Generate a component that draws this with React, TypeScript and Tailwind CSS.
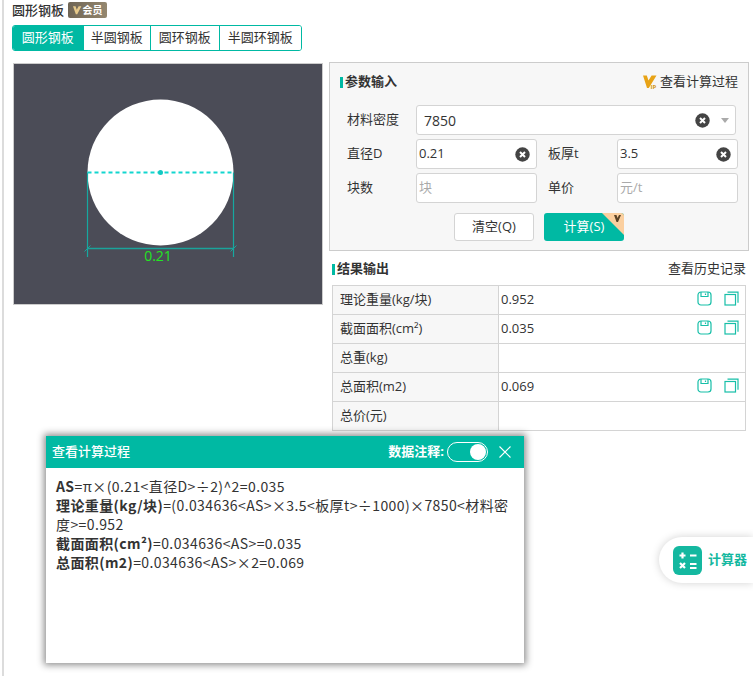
const font = { fontFamily: '"Open Sans", "Noto Sans CJK SC", sans-serif' };
const dialogFont = { fontFamily: '"Noto Sans CJK SC", sans-serif' };

const tabs = [
  { label: "圆形钢板", width: "w-[70px]" },
  { label: "半圆钢板", width: "w-[68px]" },
  { label: "圆环钢板", width: "w-[69px]" },
  { label: "半圆环钢板", width: "w-[83px]" },
];

const results = [
  { name: "理论重量(kg/块)", value: "0.952" },
  { name: "截面面积(cm²)", value: "0.035" },
  { name: "总重(kg)", value: "" },
  { name: "总面积(m2)", value: "0.069" },
  { name: "总价(元)", value: "" },
];

function ClearIcon() {
  return (
    <svg width="15" height="15" viewBox="0 0 15 15" className="shrink-0">
      <circle cx="7.500" cy="7.500" r="7.200" fill="#444" />
      <path d="M5 5l5 5M10 5l-5 5" stroke="#fff" strokeWidth="2" />
    </svg>
  );
}

function VipMark() {
  return (
    <svg width="14" height="14" viewBox="0 0 14 14">
      <path d="M0 0.500h3.800l1.700 5L8.600 0.500H13.500L5.800 13H4z" fill="#e8a316" />
      <text x="7.500" y="13.500" fontSize="6" fontWeight="700" fill="#d2950f" fontFamily="Open Sans, sans-serif">
        IP
      </text>
    </svg>
  );
}

function BadgeMark() {
  return (
    <svg width="9" height="9" viewBox="0 0 14 14">
      <path d="M0 0.500h4l1.800 5.500L8.800 0.500H13L6.600 13H4.400z" fill="#e6c98a" />
    </svg>
  );
}

function SaveIcon() {
  return (
    <svg width="15" height="15" viewBox="0 0 15 15" fill="none" stroke="#17bfa8" strokeWidth="1.200">
      <rect x="1" y="1" width="13" height="13" rx="3" />
      <path d="M4 1v4.500h7V1M8.500 2.500v1.500" />
    </svg>
  );
}

function CopyIcon() {
  return (
    <svg width="15" height="15" viewBox="0 0 15 15" fill="none" stroke="#17bfa8" strokeWidth="1.200">
      <rect x="1" y="3.500" width="10.500" height="10.500" />
      <path d="M3.500 1.200H14v10.500" />
    </svg>
  );
}

function Field({ value, placeholder }: { value?: string; placeholder?: string }) {
  return (
    <div className="flex h-[30px] w-[121px] items-center rounded-[3px] border border-[#d4d4d4] bg-white pl-[2px] pr-[6px]">
      <span className={`flex-1 text-[13px] ${value ? "text-[#333]" : "text-[#aaa]"}`}>{value || placeholder}</span>
      {value && <ClearIcon />}
    </div>
  );
}

function SectionTitle({ text }: { text: string }) {
  return (
    <div className="flex items-center text-[13px] font-bold text-[#333]">
      <span className="h-[11px] w-[3px] bg-[#00b9a3]" />
      <span className="ml-[2px]">{text}</span>
    </div>
  );
}

function ShapeDrawing() {
  return (
    <svg width="308" height="240" viewBox="0 0 308 240" className="block">
      <circle cx="146.500" cy="108.500" r="73" fill="#fff" />
      <path d="M73.500 108.500V193M219.500 108.500V193" stroke="#16a8a0" strokeWidth="1.200" />
      <path d="M73.500 184.500h146" stroke="#1aa39b" strokeWidth="1.400" />
      <path d="M70.500 187.500l6-6M216.500 187.500l6-6" stroke="#1aa39b" strokeWidth="1" />
      <path d="M73.500 108.500h146" stroke="#12d6cf" strokeWidth="2" strokeDasharray="4 3" />
      <circle cx="146.500" cy="108.500" r="2.500" fill="#12c9c2" />
      <text x="144" y="197" textAnchor="middle" fontSize="14" fill="#22e622" fontFamily="Open Sans, sans-serif">
        0.21
      </text>
    </svg>
  );
}

function ProcessDialog() {
  return (
    <div className="absolute left-[46px] top-[436px] h-[227px] w-[478px] bg-white shadow-[0_0_7px_2px_rgba(0,0,0,0.45)]">
      <div className="flex h-[32px] items-center bg-[#00b9a3] pl-[6px] pr-[13px] text-white">
        <span className="flex-1 text-[13px] font-medium">查看计算过程</span>
        <span className="text-[13px] font-bold">数据注释:</span>
        <span className="ml-[3px] flex h-[20px] w-[41px] items-center justify-end rounded-full border border-white pr-[1px]">
          <span className="h-[16px] w-[16px] rounded-full bg-white" />
        </span>
        <svg width="12" height="12" viewBox="0 0 12 12" className="ml-[11px]" stroke="#fff" strokeWidth="1.100">
          <path d="M0.500 0.500l11 11M11.500 0.500l-11 11" />
        </svg>
      </div>
      <div className="px-[10px] pt-[9px] text-[14px] leading-[19px] tracking-[0.4px] text-[#333]" style={dialogFont}>
        <p><b>AS</b>=π×(0.21&lt;直径D&gt;÷2)^2=0.035</p>
        <p><b>理论重量(kg/块)</b>=(0.034636&lt;AS&gt;×3.5&lt;板厚t&gt;÷1000)×7850&lt;材料密度&gt;=0.952</p>
        <p><b>截面面积(cm²)</b>=0.034636&lt;AS&gt;=0.035</p>
        <p><b>总面积(m2)</b>=0.034636&lt;AS&gt;×2=0.069</p>
      </div>
    </div>
  );
}

function CalculatorTab() {
  return (
    <div className="absolute left-[659px] top-[537px] flex h-[46px] w-[94px] items-center rounded-l-[23px] bg-white pl-[14px] shadow-[0_0_8px_rgba(0,0,0,0.18)]">
      <svg width="29" height="29" viewBox="0 0 29 29" className="shrink-0">
        <rect width="29" height="29" rx="6" fill="#14b8a0" />
        <path d="M9.500 6.500v6M6.500 9.500h6M17 9.500h6.500M17 18h6.500M17 22h6.500M7 17l5 5M12 17l-5 5" stroke="#fff" strokeWidth="2.200" />
      </svg>
      <span className="ml-[6px] text-[13px] font-bold text-[#14b8a0]">计算器</span>
    </div>
  );
}

export default function App() {
  return (
    <div className="relative flex h-[676px] w-[753px] overflow-hidden bg-white text-[13px] text-[#333]" style={font}>
      <div className="ml-[2px] w-[2px] shrink-0 bg-[#dcdcdc]" />
      <div className="ml-[8px] flex-1">
        <div className="flex h-[20px] items-center">
          <span className="text-[13px] font-medium leading-[20px]">圆形钢板</span>
          <span className="ml-[4px] flex h-[16px] w-[39px] items-center justify-center gap-[1px] rounded-[2px] bg-gradient-to-r from-[#6f6555] to-[#94876f] text-[10px] font-bold text-white">
            <BadgeMark />
            会员
          </span>
        </div>
        <div className="mt-[5px] flex h-[26px] w-[290px] overflow-hidden rounded-[3px] border border-[#00b9a3]">
          {tabs.map((tab, i) => (
            <div
              key={tab.label}
              className={`flex items-center justify-center text-[13px] ${tab.width} ${i > 0 ? "border-l border-[#00b9a3]" : ""} ${i === 0 ? "bg-[#00b9a3] text-white" : "bg-white text-[#333]"}`}
            >
              {tab.label}
            </div>
          ))}
        </div>
        <div className="mt-[11px] flex items-start">
          <div className="ml-[1px] mt-[1px] h-[242px] w-[310px] shrink-0 border border-[#ccc] bg-[#4b4c57]">
            <ShapeDrawing />
          </div>
          <div className="ml-[6px] w-[420px] shrink-0">
            <div className="h-[189px] border border-[#ccc] bg-[#f7f7f7] px-[10px]">
              <div className="mb-[4px] flex h-[38px] items-center justify-between">
                <SectionTitle text="参数输入" />
                <div className="flex items-center gap-[3px] text-[13px]">
                  <VipMark />
                  查看计算过程
                </div>
              </div>
              <div className="flex items-center">
                <span className="ml-[7px] w-[69px] text-[13px]">材料密度</span>
                <div className="flex h-[30px] w-[320px] items-center rounded-[3px] border border-[#d4d4d4] bg-white pl-[7px] pr-[6px]">
                  <span className="flex-1 text-[14px]">7850</span>
                  <ClearIcon />
                  <span className="ml-[11px] h-0 w-0 border-x-[4px] border-t-[5px] border-x-transparent border-t-[#aaa]" />
                </div>
              </div>
              <div className="mt-[4px] flex items-center">
                <span className="ml-[7px] w-[69px] text-[13px]">直径D</span>
                <Field value="0.21" />
                <span className="ml-[11px] w-[69px] text-[13px]">板厚t</span>
                <Field value="3.5" />
              </div>
              <div className="mt-[4px] flex items-center">
                <span className="ml-[7px] w-[69px] text-[13px]">块数</span>
                <Field placeholder="块" />
                <span className="ml-[11px] w-[69px] text-[13px]">单价</span>
                <Field placeholder="元/t" />
              </div>
              <div className="mt-[10px] flex justify-center gap-[10px]">
                <button className="h-[28px] w-[80px] rounded-[3px] border border-[#d4d4d4] bg-white text-[13px]">清空(Q)</button>
                <button className="relative h-[28px] w-[80px] overflow-hidden rounded-[3px] bg-[#00b9a3] text-[13px] text-white">
                  计算(S)
                  <svg width="22" height="22" viewBox="0 0 22 22" className="absolute right-0 top-0">
                    <path d="M0 0h22v22z" fill="#fbcf9f" />
                    <path d="M12 2h2.500l1 3 1.500-3h2l-3 7h-1.500z" fill="#5a4327" />
                  </svg>
                </button>
              </div>
            </div>
            <div className="mt-[9px] flex h-[18px] items-center justify-between px-[3px]">
              <SectionTitle text="结果输出" />
              <span className="text-[13px]">查看历史记录</span>
            </div>
            <div className="ml-[3px] mt-[7px] w-[414px] border border-b-0 border-[#d4d4d4]">
              {results.map((row) => (
                <div key={row.name} className="flex h-[29px] border-b border-[#d4d4d4]">
                  <div className="flex w-[166px] shrink-0 items-center border-r border-[#d4d4d4] bg-[#f7f7f7] pl-[7px] text-[13px]">
                    {row.name}
                  </div>
                  <div className="flex flex-1 items-center pl-[2px] pr-[6px]">
                    <span className="flex-1 text-[13px]">{row.value}</span>
                    {row.value && (
                      <span className="-mt-[3px] flex gap-[12px]">
                        <SaveIcon />
                        <CopyIcon />
                      </span>
                    )}
                  </div>
                </div>
              ))}
            </div>
          </div>
        </div>
      </div>
      <ProcessDialog />
      <CalculatorTab />
    </div>
  );
}
